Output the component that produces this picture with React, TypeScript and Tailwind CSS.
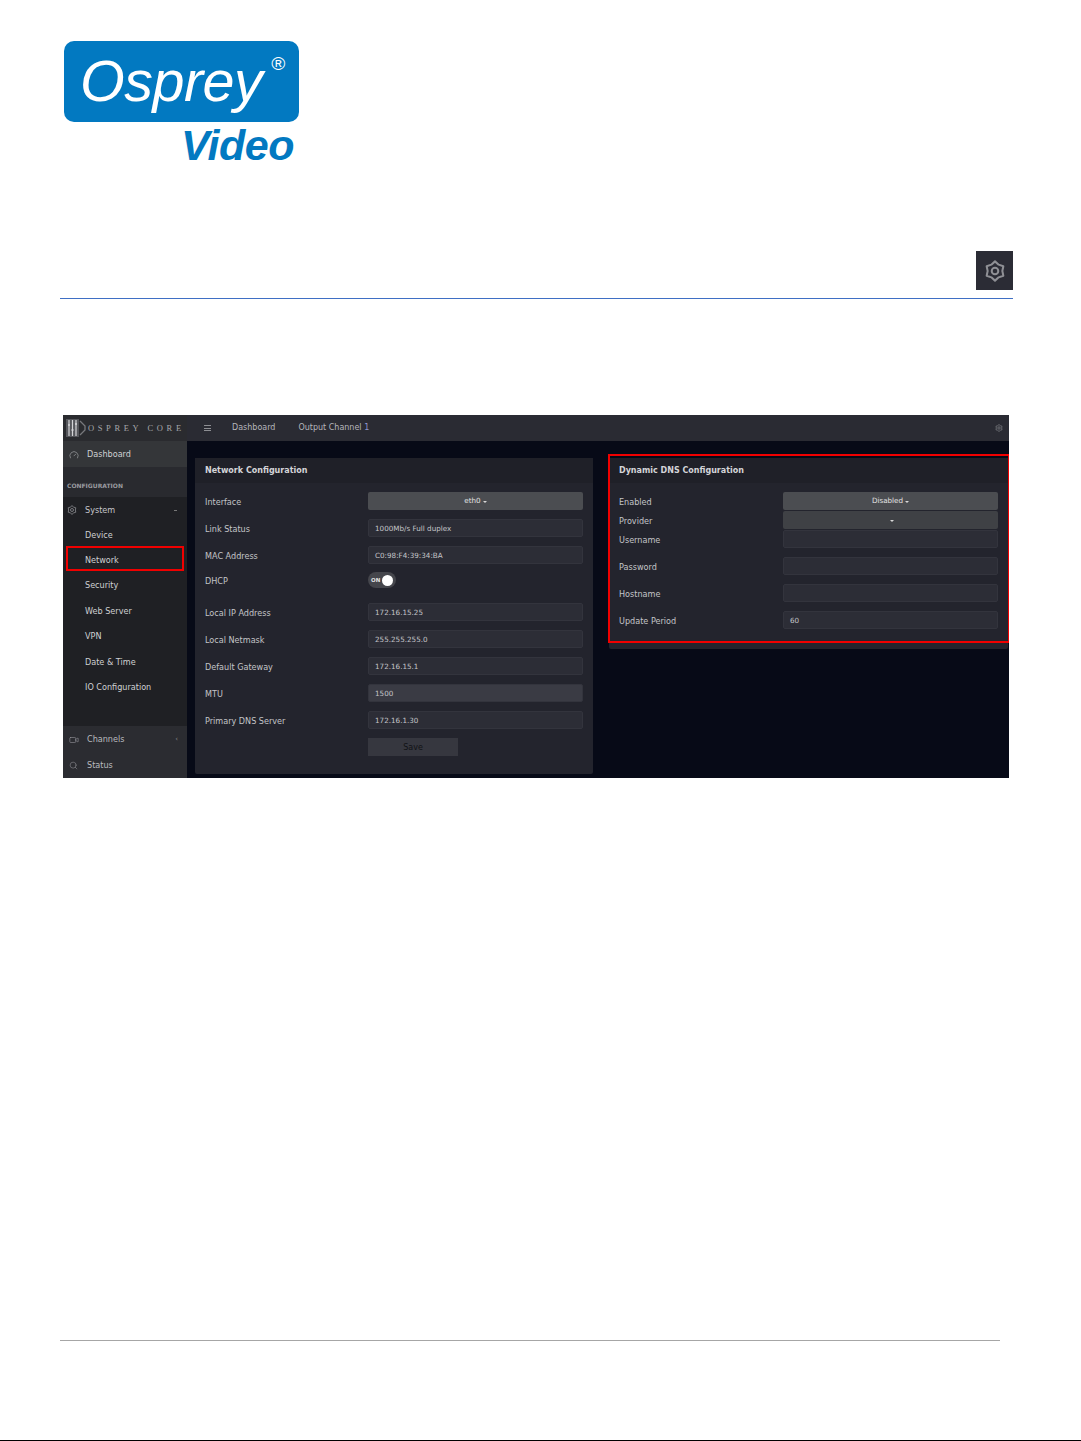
import { Gauge, Search, Video } from "lucide-react";
import type { ReactNode } from "react";

const appFont = "font-['DejaVu_Sans',sans-serif]";

const Gear = ({ size, className = "", strokeWidth = 1.6 }: { size: number; className?: string; strokeWidth?: number }) => (
  <svg
    width={size}
    height={size}
    viewBox="0 0 24 24"
    fill="none"
    stroke="currentColor"
    strokeWidth={strokeWidth}
    strokeLinejoin="round"
    className={className}
  >
    <polygon points="12,1.5 16,5.07 21.1,6.75 20,12 21.1,17.25 16,18.93 12,22.5 8,18.93 2.9,17.25 4,12 2.9,6.75 8,5.07" />
    <circle cx="12" cy="12" r="3.6" />
  </svg>
);

const Caret = () => (
  <span className="ml-[2px] inline-block h-0 w-0 border-x-[2px] border-t-[2px] border-x-transparent border-t-[#d8d8d8] align-middle" />
);

const Field = ({ value = "", highlight = false }: { value?: string; highlight?: boolean }) => (
  <div
    className={`flex h-[18px] items-center rounded-[2px] border border-[#33343d] px-[6px] pt-[2px] text-[7.2px] text-[#c4c5c9] ${
      highlight ? "bg-[#3a3b44]" : "bg-[#2c2d36]"
    }`}
  >
    {value}
  </div>
);

const Select = ({ value = "", dim = false }: { value?: string; dim?: boolean }) => (
  <div
    className={`flex h-[18px] items-center justify-center rounded-[2px] pt-[1px] text-[7.2px] text-[#e4e4e4] ${
      dim ? "bg-[#3f4145]" : "bg-[#4b4d51]"
    }`}
  >
    {value}
    <Caret />
  </div>
);

const Row = ({ label, children, className = "" }: { label: string; children: ReactNode; className?: string }) => (
  <div className={`grid grid-cols-[1fr_215px] items-center ${className}`}>
    <span className="pt-[2px] text-[8.1px] leading-none text-[#c3c4c8]">{label}</span>
    {children}
  </div>
);

const Card = ({ title, children, className = "" }: { title: string; children: ReactNode; className?: string }) => (
  <section className={`rounded-[2px] bg-[#23242d] ${className}`}>
    <h2 className="flex h-[25px] items-center bg-[#1f2028] px-[10px] text-[8px] font-bold text-[#d4d4d8]">{title}</h2>
    <div className="px-[10px] pt-[9px]">{children}</div>
  </section>
);

const NavItem = ({ label, active = false }: { label: string; active?: boolean }) => (
  <div className="relative flex h-[25.4px] items-center pl-[22px] text-[8.1px] text-[#cfd0d3]">
    {label}
    {active && <div className="absolute inset-x-[3px] -top-[1px] h-[25px] border-2 border-[#f00000]" />}
  </div>
);

const Sidebar = () => (
  <aside className="flex w-[124px] shrink-0 flex-col bg-[#1f2024] text-[8.1px]">
    <div className="flex h-[26px] items-center gap-[6px] bg-[#343639] pl-[6px] pt-[1px] text-[#d0d1d4]">
      <Gauge size={10} strokeWidth={1.5} className="text-[#a9aaae]" />
      <span className="ml-[2px]">Dashboard</span>
    </div>
    <div className="flex h-[30px] items-center bg-[#292a2f] pl-[4px] pt-[7px] text-[6px] font-bold text-[#9a9ba0]">
      CONFIGURATION
    </div>
    <div className="flex h-[25px] items-center pl-[4px] pr-[10px] pt-[1px] text-[#c5c6ca]">
      <Gear size={10} strokeWidth={2} className="text-[#8a8b90]" />
      <span className="ml-[8px]">System</span>
      <span className="ml-auto h-[1px] w-[3px] bg-[#777]" />
    </div>
    <NavItem label="Device" />
    <NavItem label="Network" active />
    <NavItem label="Security" />
    <NavItem label="Web Server" />
    <NavItem label="VPN" />
    <NavItem label="Date & Time" />
    <NavItem label="IO Configuration" />
    <div className="mt-auto flex h-[52px] flex-col bg-[#2b2c31] pl-[6px] pr-[9px] text-[#b9babe]">
      <div className="flex h-[26px] items-center pt-[1px]">
        <Video size={10} strokeWidth={1.5} className="text-[#909196]" />
        <span className="ml-[8px]">Channels</span>
        <span className="ml-auto text-[7px] text-[#888]">‹</span>
      </div>
      <div className="flex h-[26px] items-center">
        <Search size={9} strokeWidth={1.5} className="text-[#909196]" />
        <span className="ml-[9px]">Status</span>
      </div>
    </div>
  </aside>
);

const AppShot = () => (
  <div className={`relative ml-[63px] flex h-[363px] w-[946px] flex-col overflow-hidden bg-[#070a17] ${appFont}`}>
    <header className="flex h-[26px] shrink-0 items-center bg-[#2a2b33] text-[8px] text-[#b5b6bb]">
      <div className="flex h-full w-[124px] items-center bg-[#2a2b2f]">
        <svg width="22" height="20" viewBox="0 0 22 20" fill="none" className="ml-[2px]">
          <rect x="1" y="1" width="13" height="18" fill="#55565b" />
          <path d="M4 2v16M7.5 2v16M11 2v16" stroke="#d5d5d8" strokeWidth="1.2" />
          <path d="M3 7h2M6.5 12h2M10 6h2" stroke="#d5d5d8" strokeWidth="1.5" />
          <path d="M15 3l5 5v4l-5 5" stroke="#77787c" strokeWidth="1.3" />
        </svg>
        <span className="ml-[1px] whitespace-nowrap font-['Liberation_Serif',serif] text-[8.5px] tracking-[3.6px] text-[#a5a6aa]">
          OSPREY CORE
        </span>
      </div>
      <div className="ml-[17px] flex w-[7px] flex-col gap-[1.5px]">
        <span className="h-[1px] bg-[#8d8e93]" />
        <span className="h-[1px] bg-[#8d8e93]" />
        <span className="h-[1px] bg-[#8d8e93]" />
      </div>
      <span className="ml-[21px]">Dashboard</span>
      <span className="ml-[23px]">
        Output Channel <span className="text-[#8f96d0]">1</span>
      </span>
      <Gear size={8} strokeWidth={2} className="ml-auto mr-[6px] text-[#85868b]" />
    </header>
    <div className="flex min-h-0 flex-1">
      <Sidebar />
      <main className="flex flex-1 items-start gap-[16px] pl-[8px] pt-[17px]">
        <Card title="Network Configuration" className="h-[316px] w-[398px]">
          <div className="flex flex-col gap-[9px]">
            <Row label="Interface">
              <Select value="eth0" />
            </Row>
            <Row label="Link Status">
              <Field value="1000Mb/s Full duplex" />
            </Row>
            <Row label="MAC Address">
              <Field value="C0:98:F4:39:34:BA" />
            </Row>
            <Row label="DHCP" className="-mt-px mb-[6px]">
              <div className="flex h-[16px] w-[28px] items-center rounded-full bg-[#45464c] pl-[3px] text-[5.5px] font-bold text-[#e4e4e4]">
                ON
                <span className="ml-[2px] h-[11px] w-[11px] rounded-full bg-white" />
              </div>
            </Row>
            <Row label="Local IP Address">
              <Field value="172.16.15.25" />
            </Row>
            <Row label="Local Netmask">
              <Field value="255.255.255.0" />
            </Row>
            <Row label="Default Gateway">
              <Field value="172.16.15.1" />
            </Row>
            <Row label="MTU">
              <Field value="1500" highlight />
            </Row>
            <Row label="Primary DNS Server">
              <Field value="172.16.1.30" />
            </Row>
            <Row label="">
              <div className="flex h-[18px] w-[90px] items-center justify-center bg-[#36373f] pt-[1px] text-[8px] text-[#111216]">
                Save
              </div>
            </Row>
          </div>
        </Card>
        <Card title="Dynamic DNS Configuration" className="h-[191px] w-[399px]">
          <div className="flex flex-col gap-[1px]">
            <Row label="Enabled">
              <Select value="Disabled" />
            </Row>
            <Row label="Provider">
              <Select dim />
            </Row>
            <Row label="Username">
              <Field />
            </Row>
            <Row label="Password" className="mt-[8px]">
              <Field />
            </Row>
            <Row label="Hostname" className="mt-[8px]">
              <Field />
            </Row>
            <Row label="Update Period" className="mt-[8px]">
              <Field value="60" />
            </Row>
          </div>
        </Card>
      </main>
    </div>
    {/* red callout drawn over the right hand card */}
    <div className="absolute left-[545px] top-[39px] h-[189px] w-[402px] border-2 border-[#f00000]" />
  </div>
);

const Logo = () => (
  <div className="ml-[64px] w-[235px]">
    <div className="relative flex h-[81px] items-center rounded-[10px] bg-[#0279c1] pl-[16px] font-['Liberation_Sans',sans-serif] italic text-white">
      <span className="text-[57.5px] leading-none tracking-[-0.5px]">Osprey</span>
      <span className="absolute right-[14px] top-[13px] text-[19px] leading-none">®</span>
    </div>
    <div className="mt-[2px] pl-[117px] font-['Liberation_Sans',sans-serif] text-[43px] font-bold italic leading-[42px] tracking-[-0.5px] text-[#0279c1]">
      Video
    </div>
  </div>
);

export default function App() {
  return (
    <div className="flex h-[1441px] w-[1081px] flex-col overflow-hidden bg-white pt-[41px]">
      <Logo />
      <div className="mr-[68px] mt-[85px] flex h-[47px] justify-end">
        <div className="flex h-[39px] w-[37px] items-center justify-center bg-[#2b2c35]">
          <Gear size={22} strokeWidth={2.2} className="text-[#8f9095]" />
        </div>
      </div>
      <div className="ml-[60px] mr-[68px] h-px bg-[#3f6fc4]" />
      <div className="mt-[116px]">
        <AppShot />
      </div>
      <div className="ml-[60px] mr-[81px] mt-auto mb-[99px] h-px bg-[#a6a6a6]" />
      <div className="h-px bg-black" />
    </div>
  );
}
